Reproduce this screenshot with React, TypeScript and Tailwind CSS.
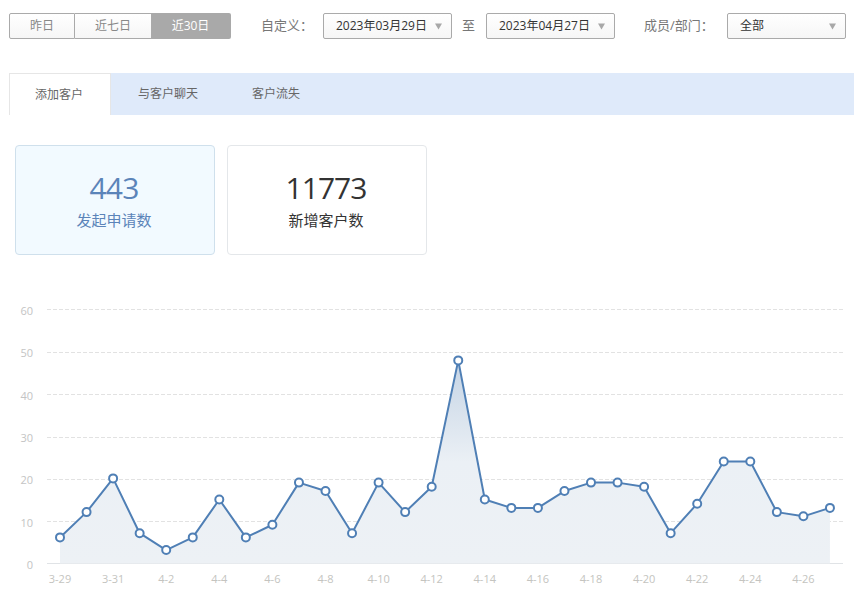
const data = [6,12,20,7,3,6,15,6,9,19,17,7,19,12,18,48,15,13,13,17,19,19,18,7,14,24,24,12,11,13];
const X = (i: number) => 60 + i * 26.55;
const Y = (v: number) => 267.7 - v * 4.215;
const line = data.map((v, i) => `${i ? "L" : "M"}${X(i).toFixed(2)} ${Y(v).toFixed(2)}`).join(" ");
const area = `${line} L${X(29).toFixed(2)} 268.5 L60 268.5 Z`;
const labels = ["3-29","3-31","4-2","4-4","4-6","4-8","4-10","4-12","4-14","4-16","4-18","4-20","4-22","4-24","4-26"];
const gridY = [57.5, 99.5, 142.5, 184.5, 226.5, 14.5];
const font = { fontFamily: "'Open Sans','Noto Sans CJK SC',sans-serif" };

function Select({ text, w }: { text: string; w: string }) {
  return (
    <div className={`${w} pl-[12px] pr-[9px] h-[26px] flex items-center justify-between border border-[#aaaaaa] rounded-[2px] bg-gradient-to-b from-white to-[#f6f6f6] text-[12px] text-[#333333]`}>
      <span>{text}</span>
      <svg width="7" height="7" viewBox="0 0 7 7"><path d="M0 0.5H7L3.5 6.5Z" fill="#a8a8a8" /></svg>
    </div>
  );
}

export default function App() {
  return (
    <div className="w-[854px] h-[594px] bg-white overflow-hidden" style={font}>
      <div className="flex items-center pt-[13px] pl-[9px]">
        <div className="flex h-[26px] text-[12px] text-[#888888]">
          <div className="w-[66px] flex items-center justify-center border border-[#aaaaaa] rounded-l-[2px] bg-gradient-to-b from-white to-[#f6f6f6]">昨日</div>
          <div className="w-[77px] flex items-center justify-center border-y border-r border-[#aaaaaa] bg-gradient-to-b from-white to-[#f6f6f6]">近七日</div>
          <div className="w-[79px] pr-[2px] flex items-center justify-center bg-[#a9a9a9] text-white rounded-r-[2px]">近30日</div>
        </div>
        <span className="ml-[30px] w-[62px] text-[13px] text-[#777777] whitespace-nowrap">自定义：</span>
        <Select text="2023年03月29日" w="w-[129px]" />
        <span className="ml-[10px] w-[24px] text-[13px] text-[#777777]">至</span>
        <Select text="2023年04月27日" w="w-[129px]" />
        <span className="ml-[29px] w-[83px] text-[13px] text-[#777777] whitespace-nowrap">成员/部门：</span>
        <Select text="全部" w="w-[119px]" />
      </div>

      <div className="mt-[34px] ml-[9px] h-[42px] bg-[#dfeafa] flex text-[12px] text-[#666666]">
        <div className="w-[102px] h-[42px] pr-[2px] bg-white border-x border-t border-[#e6e6e6] flex items-center justify-center">添加客户</div>
        <div className="ml-[27px] w-[60px] flex items-center">与客户聊天</div>
        <div className="ml-[54px] flex items-center">客户流失</div>
      </div>

      <div className="flex gap-[12px] mt-[30px] ml-[15px]">
        <div className="w-[200px] h-[110px] pr-[2px] rounded-[4px] border border-[#cfe0ec] bg-[#f2faff] flex flex-col items-center pt-[22px] text-[#5b84b9]">
          <div className="text-[30px] leading-[40px] tracking-[-0.8px]">443</div>
          <div className="text-[15px] leading-[20px] mt-[2px]">发起申请数</div>
        </div>
        <div className="w-[200px] h-[110px] pr-[2px] rounded-[4px] border border-[#e4e7ea] bg-white flex flex-col items-center pt-[22px] text-[#333333]">
          <div className="text-[30px] leading-[40px] tracking-[-1px]">11773</div>
          <div className="text-[15px] leading-[20px] mt-[2px]">新增客户数</div>
        </div>
      </div>

      <svg width="854" height="299" className="block mt-[40px]" style={font}>
        <defs>
          <linearGradient id="fill" x1="0" y1="0" x2="0" y2="1">
            <stop offset="0" stopColor="#c5d4e5" />
            <stop offset="0.5" stopColor="#ebf0f5" />
            <stop offset="1" stopColor="#edf1f5" />
          </linearGradient>
        </defs>
        {gridY.map((y) => (
          <line key={y} x1="47" x2="843" y1={y} y2={y} stroke="#e2e2e2" strokeWidth="1" strokeDasharray="4 2" />
        ))}
        <line x1="47" x2="843" y1="268.5" y2="268.5" stroke="#e0e3e6" strokeWidth="1" />
        {[0,1,2,3,4,5,6].map((n) => (
          <text key={n} x="33" y={274 - n * 42.33} textAnchor="end" fontSize="11" fill="#c4c4c4">{n * 10}</text>
        ))}
        <path d={area} fill="url(#fill)" />
        <path d={line} fill="none" stroke="#4f7fb5" strokeWidth="2" strokeLinejoin="round" />
        {data.map((v, i) => (
          <circle key={i} cx={X(i)} cy={Y(v)} r="4" fill="white" stroke="#4f7fb5" strokeWidth="2" />
        ))}
        {labels.map((l, i) => (
          <text key={l} x={X(i * 2)} y="288" textAnchor="middle" fontSize="11" fill="#c4c4c0">{l}</text>
        ))}
      </svg>
    </div>
  );
}
